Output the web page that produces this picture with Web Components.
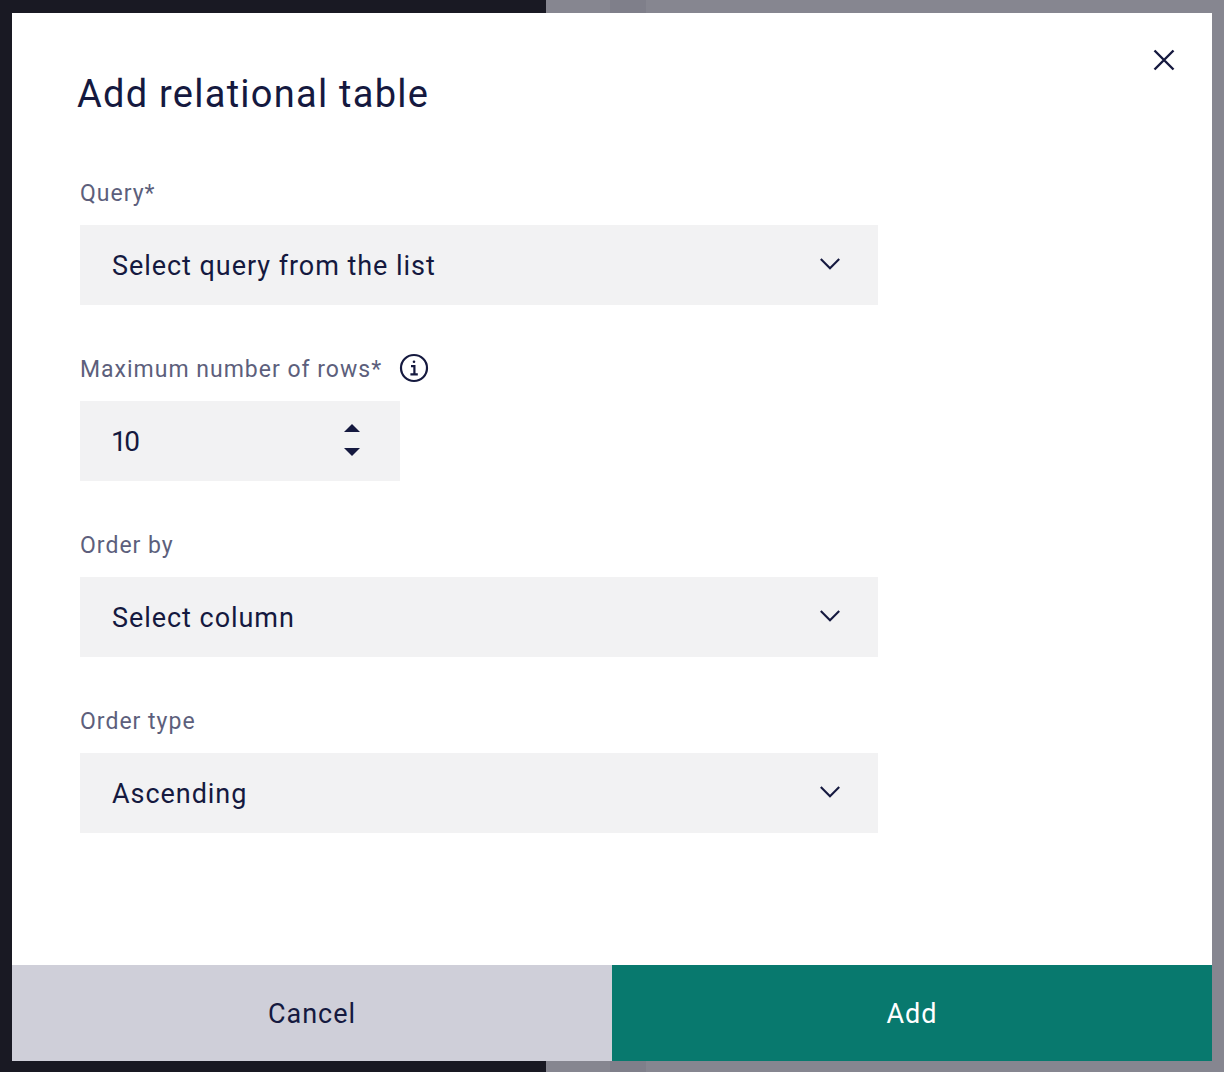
<!DOCTYPE html>
<html lang="en">
<head>
<meta charset="utf-8">
<title>Add relational table</title>
<style>
  html, body { margin: 0; height: 100%; }
  body { font-family: "Roboto", "Liberation Sans", sans-serif; color: #15193f; overflow: hidden; }
</style>
</head>
<body>
<page-backdrop>
  <modal-dialog heading="Add relational table">
    <form-field label="Query*">
      <select-box>Select query from the list</select-box>
    </form-field>
    <form-field label="Maximum number of rows*" info>
      <number-box value="10"></number-box>
    </form-field>
    <form-field label="Order by">
      <select-box>Select column</select-box>
    </form-field>
    <form-field label="Order type">
      <select-box>Ascending</select-box>
    </form-field>
  </modal-dialog>
</page-backdrop>

<script>
// The page behind the dialog, dimmed: only its column edges are visible.
class PageBackdrop extends HTMLElement {
  connectedCallback() {
    const shadow = this.attachShadow({ mode: 'open' })
    shadow.innerHTML = `
      <style>
        :host {
          display: grid;
          grid-template-columns: 546px 64px 36px 1fr;
          height: 1072px;
          position: relative;
        }
        .a { background: #191923; }
        .b { background: #868690; }
        .c { background: #7f7f8a; }
      </style>
      <div class="a"></div><div class="b"></div><div class="c"></div><div class="b"></div>
      <slot></slot>
    `
  }
}

// Dialog shell: heading, close button, slotted fields and the two footer buttons.
class ModalDialog extends HTMLElement {
  connectedCallback() {
    const shadow = this.attachShadow({ mode: 'open' })
    shadow.innerHTML = `
      <style>
        :host {
          display: flex;
          flex-direction: column;
          position: absolute;
          left: 12px;
          top: 13px;
          width: 1200px;
          height: 1048px;
          background: #fff;
        }
        .body { flex: 1; padding: 56px 68px 0 68px; position: relative; }
        h1 {
          margin: 0 0 53px -3px;
          font-size: 38px;
          line-height: 50px;
          font-weight: 400;
          letter-spacing: 1.25px;
        }
        .close {
          position: absolute;
          right: 37px;
          top: 36px;
          width: 22px;
          height: 22px;
          display: block;
        }
        footer { display: grid; grid-template-columns: 1fr 1fr; height: 96px; }
        footer div {
          display: flex;
          align-items: center;
          justify-content: center;
          padding-top: 2px;
          font-size: 27px;
          letter-spacing: 1px;
        }
        .cancel { background: #cfcfd9; }
        .add { background: #08796e; color: #fff; }
      </style>
      <div class="body">
        <h1></h1>
        <svg class="close" viewBox="0 0 22 22" fill="none" stroke="#15193f" stroke-width="2.4">
          <path d="M1.5 1.5l19 19M20.5 1.5l-19 19"/>
        </svg>
        <slot></slot>
      </div>
      <footer>
        <div class="cancel">Cancel</div>
        <div class="add">Add</div>
      </footer>
    `
    shadow.querySelector('h1').textContent = this.getAttribute('heading')
  }
}

// Label above a control, with an optional info icon next to the label.
class FormField extends HTMLElement {
  connectedCallback() {
    const shadow = this.attachShadow({ mode: 'open' })
    shadow.innerHTML = `
      <style>
        :host { display: block; margin-bottom: 43px; }
        .label {
          display: flex;
          align-items: center;
          gap: 17px;
          height: 42px;
          margin-bottom: 11px;
          font-size: 23px;
          letter-spacing: 1px;
          color: #5d5f7c;
        }
        svg { width: 30px; height: 30px; margin-top: -3px; }
      </style>
      <div class="label">
        <span></span>
        ${this.hasAttribute('info') ? `
        <svg viewBox="0 0 30 30" fill="none" stroke="#15193f" stroke-width="2.2">
          <circle cx="15" cy="15" r="13"/>
          <path d="M12 13.2h3.4v8M11.4 21.4h7.4"/>
          <circle cx="15" cy="8.8" r="1.3" fill="#15193f" stroke="none"/>
        </svg>` : ''}
      </div>
      <slot></slot>
    `
    shadow.querySelector('span').textContent = this.getAttribute('label')
  }
}

class SelectBox extends HTMLElement {
  connectedCallback() {
    const shadow = this.attachShadow({ mode: 'open' })
    shadow.innerHTML = `
      <style>
        :host {
          display: flex;
          align-items: center;
          justify-content: space-between;
          width: 798px;
          height: 80px;
          box-sizing: border-box;
          padding: 2px 38px 0 32px;
          background: #f2f2f3;
          font-size: 27px;
          letter-spacing: 0.95px;
        }
        svg { width: 20px; height: 12px; margin-top: -5px; }
      </style>
      <slot></slot>
      <svg viewBox="0 0 20 12" fill="none" stroke="#15193f" stroke-width="2.1">
        <path d="M.8 1l9.2 9.2L19.2 1"/>
      </svg>
    `
  }
}

class NumberBox extends HTMLElement {
  connectedCallback() {
    const shadow = this.attachShadow({ mode: 'open' })
    shadow.innerHTML = `
      <style>
        :host {
          display: flex;
          align-items: center;
          justify-content: space-between;
          width: 320px;
          height: 80px;
          box-sizing: border-box;
          padding: 0 40px 0 31px;
          background: #f2f2f3;
          font-size: 28px;
          letter-spacing: -2.5px;
        }
        svg { width: 16px; height: 32px; margin-top: -2px; }
      </style>
      <span></span>
      <svg viewBox="0 0 16 32" fill="#15193f">
        <path d="M8 0l8 8H0zM0 24h16l-8 8z"/>
      </svg>
    `
    shadow.querySelector('span').textContent = this.getAttribute('value')
  }
}

customElements.define('page-backdrop', PageBackdrop)
customElements.define('modal-dialog', ModalDialog)
customElements.define('form-field', FormField)
customElements.define('select-box', SelectBox)
customElements.define('number-box', NumberBox)
</script>
</body>
</html>
